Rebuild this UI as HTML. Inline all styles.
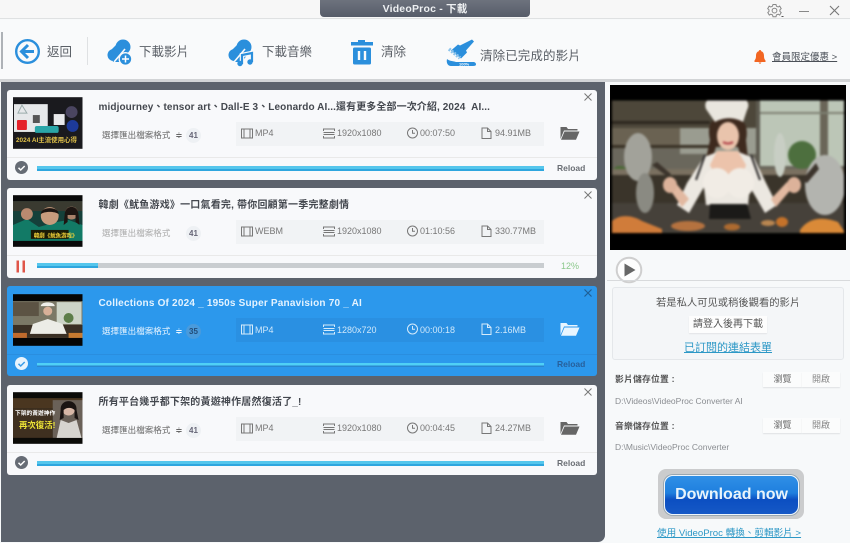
<!DOCTYPE html>
<html lang="zh-Hant"><head><meta charset="utf-8"><title>VideoProc - 下載</title>
<style>
*{box-sizing:border-box;margin:0;padding:0}
html,body{width:850px;height:543px;overflow:hidden;background:#f7f9fa}
body{position:relative;font-family:"Liberation Sans","Noto Sans CJK TC",sans-serif;color:#555;filter:blur(.3px)}
.a{position:absolute;white-space:nowrap}
.tb{font-size:12.5px;color:#5a5f66;line-height:16px}
.card{position:absolute;left:7px;width:590px;height:90px;background:#f8f9fb;border-radius:3px;overflow:hidden}
.card.sel{background:#2c98ec}
.thumb{position:absolute;left:6px;top:7.500px;width:69.500px;height:52px}
.title{position:absolute;left:91.500px;top:10px;font-size:10px;font-weight:700;color:#44484f;line-height:16px;white-space:nowrap;letter-spacing:.2px}
.sel .title{color:#e4f3ff}
.fmt{position:absolute;left:95px;top:38px;font-size:8.500px;line-height:14px;color:#666;white-space:nowrap;letter-spacing:.05px}
.sel .fmt{color:#eaf5ff}
.fmt.dim{color:#aaa}
.fmt b{font-weight:400;margin-left:5px}
.num{position:absolute;left:179px;top:38px;width:15px;height:15px;border-radius:8px;background:#eef1f4;font-size:8px;font-weight:700;text-align:center;line-height:15px;color:#667}
.sel .num{background:#4a9bdc;color:#234d78}
.row{position:absolute;left:229px;top:32px;width:308px;height:24px;background:#f1f3f5}
.sel .row{background:#2a90e2}
.it{position:absolute;top:5.500px;font-size:9px;line-height:13px;color:#777;white-space:nowrap}
.sel .it{color:#cfe8fb}
.ic{position:absolute;top:5px}
.div{position:absolute;left:0;top:67.500px;width:590px;height:1px;background:#e9e9e9}
.sel .div{background:#2a8edf}
.bar{position:absolute;left:30px;top:76px;width:507px;height:5px;background:linear-gradient(#55c6ec 0 60%,#2ea6de 60%)}
.bar.part{background:#c9cdd0}
.bar i{position:absolute;left:0;top:0;height:5px;width:61px;background:linear-gradient(#55c6ec 0 60%,#2ea6de 60%)}
.sel .bar{top:77px;height:4px;background:linear-gradient(#4fd0f6 0 65%,#2a86d0 65%)}
.rl{position:absolute;left:550px;top:72px;font-size:8.500px;font-weight:700;line-height:12px;color:#6a6e74}
.sel .rl{color:#27609c}
.x{position:absolute;left:576px;top:2px}
.folder{position:absolute;left:553px;top:36px}
.chk{position:absolute;left:7.500px;top:71px}
.sb{position:absolute;background:#fbfcfc;box-shadow:0 1px 1px #dfe2e4;font-size:9px;color:#666;text-align:center;line-height:15px;height:15px}
</style></head><body>

<!-- title bar -->
<div class="a" style="left:0;top:0;width:850px;height:19px;background:#f7f7f7;border-bottom:1px solid #dfe1e2"></div>
<div class="a" style="left:320px;top:0;width:210px;height:16.500px;background:linear-gradient(#6d727d,#565c69);border-radius:0 0 4px 4px;color:#eef0f2;font-size:10.500px;font-weight:700;text-align:center;line-height:18px;letter-spacing:.2px">VideoProc - 下載</div>
<svg class="a" style="left:766px;top:3px" width="18" height="16" viewBox="0 0 18 16" fill="none" stroke="#888" stroke-width="1"><path d="M7 1.500h3l.5 1.800 1.700.7 1.500-.9 1.500 2.500-1.300 1.200v1.600l1.300 1.200-1.500 2.500-1.500-.9-1.700.7-.5 1.800H7l-.5-1.800-1.700-.7-1.500.9-1.500-2.500L3 8.400V6.800L1.700 5.600l1.500-2.500 1.500.9 1.700-.7z"/><circle cx="8.500" cy="7.600" r="2.400"/><path d="M15.500 13.500h2" stroke="#555"/></svg>
<div class="a" style="left:799px;top:10.500px;width:10px;height:1px;background:#888"></div>
<svg class="a" style="left:829px;top:5px" width="11" height="11" stroke="#777" stroke-width="1.100"><path d="M1 1l9 9M10 1l-9 9"/></svg>

<!-- toolbar -->
<div class="a" style="left:0;top:20px;width:850px;height:60px;background:#f9fafb"></div>
<div class="a" style="left:1px;top:32px;width:2px;height:37px;background:#aeb2b7"></div>
<div class="a" style="left:87px;top:37px;width:1px;height:28px;background:#dfe1e3"></div>
<svg class="a" style="left:14px;top:38px" width="28" height="28" viewBox="0 0 28 28"><circle cx="13.500" cy="13.500" r="11.300" fill="#f9fafb" stroke="#2b8fdc" stroke-width="2.400"/><path d="M14 7l-6.500 6.500L14 20M8 13.500h12" fill="none" stroke="#2b8fdc" stroke-width="3"/></svg>
<div class="a tb" style="left:47px;top:44px">返回</div>
<svg class="a" style="left:105px;top:37px" width="30" height="30" viewBox="0 0 30 30"><g fill="#2b8fdc"><circle cx="8.500" cy="18" r="6"/><circle cx="18" cy="10" r="7.500"/><path d="M5 14l9-9 10 9-8 11H8z"/></g><path d="M9 25l11-13" stroke="#f9fafb" stroke-width="1.600"/><circle cx="20.500" cy="22" r="6.300" fill="#2b8fdc" stroke="#f9fafb" stroke-width="1.300"/><path d="M17 22h7M20.500 18.500v7" stroke="#fff" stroke-width="1.500"/></svg>
<div class="a tb" style="left:139px;top:44px">下載影片</div>
<svg class="a" style="left:227px;top:37px" width="30" height="30" viewBox="0 0 30 30"><g fill="#2b8fdc"><circle cx="7.500" cy="18" r="6"/><circle cx="17" cy="10" r="7.500"/><path d="M4 14l9-9 10 9-8 11H7z"/></g><path d="M7 25l11-13" stroke="#f9fafb" stroke-width="1.600"/><path d="M15 27V18l10-2v9" fill="none" stroke="#f9fafb" stroke-width="4.500"/><path d="M15 27V18l10-2v9" fill="none" stroke="#2b8fdc" stroke-width="2.200"/><circle cx="13" cy="26.500" r="2.700" fill="#2b8fdc"/><circle cx="23" cy="25" r="2.700" fill="#2b8fdc"/></svg>
<div class="a tb" style="left:262px;top:44px">下載音樂</div>
<svg class="a" style="left:350px;top:39px" width="24" height="28" viewBox="0 0 24 28"><path d="M8.500 3V1.500h6V3M1.500 3.500h21v2.500h-21z" fill="#2b8fdc" stroke="#2b8fdc"/><rect x="3" y="8.500" width="18" height="17" rx="1.500" fill="#2b8fdc"/><path d="M9 12v9M15 12v9" stroke="#f9fafb" stroke-width="2.400"/></svg>
<div class="a tb" style="left:381px;top:44px">清除</div>
<svg class="a" style="left:445px;top:38px" width="32" height="30" viewBox="0 0 32 30"><path d="M27 1.500l2 2-8 9 1 2-6 6-10-8 7-6 2 1z" fill="#2b8fdc"/><path d="M4 11l11 9" stroke="#8cc4ec" stroke-width="3.500" stroke-dasharray="2 1.200"/><path d="M2 21c2 2 6 2 9 3h17c2 0 3 1 3 2.500 0 1-1 1.500-3 1.500H6c-3 0-5-3-4-7z" fill="#2b8fdc"/><text x="14" y="27.400" font-size="4" font-weight="700" fill="#fff">100%</text></svg>
<div class="a tb" style="left:480px;top:47.500px;letter-spacing:.1px">清除已完成的影片</div>
<svg class="a" style="left:754px;top:50px" width="12" height="14" viewBox="0 0 12 14"><path d="M6 0c.8 0 1.200.6 1.200 1.200C9.300 1.800 10 3.600 10 6c0 2.500.7 3.500 1.500 4.500V12H.5v-1.500C1.300 9.500 2 8.500 2 6c0-2.400.7-4.200 2.800-4.800C4.800.6 5.200 0 6 0zM4.500 12.500h3L6 14z" fill="#f26522"/></svg>
<div class="a" style="left:772px;top:50.500px;font-size:9.500px;line-height:13px;color:#4b5058;text-decoration:underline">會員限定優惠 &gt;</div>

<!-- left panel -->
<div class="a" style="left:0;top:79px;width:850px;height:3px;background:#d2d4d6"></div>
<div class="a" style="left:1px;top:82px;width:604px;height:460px;background:#5c626c;border-radius:0 0 7px 0"></div>

<!-- card 1 -->
<div class="card" style="top:89.500px">
<svg class="thumb" viewBox="0 0 70 52"><rect width="70" height="52" fill="#1a1a1e"/><rect x="1" y="7" width="34" height="28" fill="#e6e8ea"/><rect x="20" y="18" width="7" height="8" fill="#555"/><path d="M5 16l4-8 5 8z" fill="none" stroke="#9aa" stroke-width="1"/><rect x="4" y="23" width="10" height="10" rx="1" fill="#e5222a"/><rect x="41" y="17" width="11" height="11" fill="#e9eaec"/><circle cx="60" cy="29" r="6" fill="#1d3a9a"/><circle cx="59" cy="15" r="6" fill="#4a4560"/><rect x="22" y="29" width="24" height="7" rx="2" fill="#2aa6a8"/><text x="3" y="45" font-size="6.500" font-weight="700" fill="#e2c34a">2024 AI主流使用心得</text></svg>
<div class="title" style="letter-spacing:.1px">midjourney、tensor art、Dall-E 3、Leonardo AI...還有更多全部一次介紹, 2024&nbsp; AI...</div>
<div class="fmt">選擇匯出檔案格式<b>≑</b></div><div class="num">41</div>
<div class="row"><svg class="ic" style="left:5px" width="12" height="13" fill="none" stroke="#777"><path d="M.5 2h11v9H.500zM3 2v9M9 2v9"/></svg><div class="it" style="left:19px">MP4</div><svg class="ic" style="left:87px" width="13" height="13" fill="none" stroke="#777"><path d="M.5 4V2h11v2M.500 5.500h11M.5 9v2h11V9M.500 7.500h11"/></svg><div class="it" style="left:101px">1920x1080</div><svg class="ic" style="left:170px" width="13" height="13" fill="none" stroke="#777"><circle cx="6.500" cy="6" r="5"/><path d="M6.500 3v3.300h2.500"/></svg><div class="it" style="left:184px">00:07:50</div><svg class="ic" style="left:245px" width="11" height="13" fill="none" stroke="#777"><path d="M1 1h5.500L10 4.500V11.500H1zM6.500 1v3.500H10"/></svg><div class="it" style="left:259px">94.91MB</div></div>
<svg class="folder" width="20" height="15" viewBox="0 0 20 15"><path d="M.5 1h6l1.500 2h9.500v1.500H4L.5 13z" fill="#666"/><path d="M4.500 5.500h15L16 13.800H1z" fill="#666"/></svg>
<svg class="x" width="10" height="10" stroke="#777"><path d="M1.500 1.500l7 7M8.500 1.500l-7 7"/></svg>
<div class="div"></div>
<svg class="chk" width="13" height="13"><circle cx="6.500" cy="6.500" r="6.500" fill="#666c75"/><path d="M3.500 6.800l2.200 2.200 4-4" fill="none" stroke="#fff" stroke-width="1.500"/></svg>
<div class="bar"></div><div class="rl">Reload</div>
</div>

<!-- card 2 -->
<div class="card" style="top:187.500px">
<svg class="thumb" viewBox="0 0 70 52"><rect width="70" height="52" fill="#0a0a0a"/><rect y="6" width="70" height="40" fill="#15403a"/><rect x="0" y="6" width="70" height="10" fill="#3a3a30"/><path d="M0 30l14-6 12 8 18-5 12-2 14 5v16H0z" fill="#127a66"/><circle cx="14" cy="19" r="6" fill="#b88a70"/><circle cx="37" cy="21" r="9" fill="#c79b7d"/><path d="M28 19c0-8 18-8 18 0-4-3-14-3-18 0z" fill="#1c1512"/><circle cx="59" cy="18" r="6.500" fill="#a8816a"/><path d="M52 20c0-11 14-11 14 0l1 10-4-3V20H55v7l-4 3z" fill="#1d1512"/><rect x="18" y="35" width="38" height="9" fill="#1a1a06"/><text x="21" y="42.500" font-size="5.500" font-weight="700" fill="#f3d43a">韓劇《魷魚游戏》</text></svg>
<div class="title">韓劇《魷鱼游戏》一口氣看完, 帶你回顧第一季完整劇情</div>
<div class="fmt dim">選擇匯出檔案格式</div><div class="num">41</div>
<div class="row"><svg class="ic" style="left:5px" width="12" height="13" fill="none" stroke="#777"><path d="M.5 2h11v9H.500zM3 2v9M9 2v9"/></svg><div class="it" style="left:19px">WEBM</div><svg class="ic" style="left:87px" width="13" height="13" fill="none" stroke="#777"><path d="M.5 4V2h11v2M.500 5.500h11M.5 9v2h11V9M.500 7.500h11"/></svg><div class="it" style="left:101px">1920x1080</div><svg class="ic" style="left:170px" width="13" height="13" fill="none" stroke="#777"><circle cx="6.500" cy="6" r="5"/><path d="M6.500 3v3.300h2.500"/></svg><div class="it" style="left:184px">01:10:56</div><svg class="ic" style="left:245px" width="11" height="13" fill="none" stroke="#777"><path d="M1 1h5.500L10 4.500V11.500H1zM6.500 1v3.500H10"/></svg><div class="it" style="left:259px">330.77MB</div></div>
<svg class="x" width="10" height="10" stroke="#777"><path d="M1.500 1.500l7 7M8.500 1.500l-7 7"/></svg>
<div class="div"></div>
<svg class="chk" style="top:72px;left:9px" width="11" height="13"><path d="M.5.500h2.500v12H.500zM6.500.500H9v12H6.500z" fill="#e0564a"/></svg>
<div class="bar part" style="top:75.500px"><i></i></div><div class="rl" style="left:554px;color:#8cc98c;font-weight:400;top:72px;font-size:9px">12%</div>
</div>

<!-- card 3 -->
<div class="card sel" style="top:286px">
<svg class="thumb" viewBox="0 0 70 52"><rect width="70" height="52" fill="#050505"/><rect y="7" width="70" height="37" fill="#7b7866"/><rect x="44" y="8" width="25" height="22" fill="#cdd4c7"/><rect y="8" width="26" height="14" fill="#5c5344"/><circle cx="56" cy="24" r="5" fill="#5c7d48"/><rect y="31" width="70" height="13" fill="#3a2f24"/><path d="M20 30l15-5 15 5 4 10H17z" fill="#ecece6"/><circle cx="35" cy="17" r="4.500" fill="#d8b098"/><path d="M28 12c0-5 14-5 14 0z" fill="#eeeee9"/><rect x="0" y="39" width="14" height="5" fill="#c06a2c"/><rect x="56" y="39" width="14" height="5" fill="#c67a30"/></svg>
<div class="title">Collections Of 2024 _ 1950s Super Panavision 70 _ AI</div>
<div class="fmt">選擇匯出檔案格式<b>≑</b></div><div class="num">35</div>
<div class="row"><svg class="ic" style="left:5px" width="12" height="13" fill="none" stroke="#d5ebfb"><path d="M.5 2h11v9H.500zM3 2v9M9 2v9"/></svg><div class="it" style="left:19px">MP4</div><svg class="ic" style="left:87px" width="13" height="13" fill="none" stroke="#d5ebfb"><path d="M.5 4V2h11v2M.500 5.500h11M.5 9v2h11V9M.500 7.500h11"/></svg><div class="it" style="left:101px">1280x720</div><svg class="ic" style="left:170px" width="13" height="13" fill="none" stroke="#d5ebfb"><circle cx="6.500" cy="6" r="5"/><path d="M6.500 3v3.300h2.500"/></svg><div class="it" style="left:184px">00:00:18</div><svg class="ic" style="left:245px" width="11" height="13" fill="none" stroke="#d5ebfb"><path d="M1 1h5.500L10 4.500V11.500H1zM6.500 1v3.500H10"/></svg><div class="it" style="left:259px">2.16MB</div></div>
<svg class="folder" width="20" height="15" viewBox="0 0 20 15"><path d="M.5 1h6l1.500 2h9.500v1.500H4L.5 13z" fill="#e8f5ff"/><path d="M4.500 5.500h15L16 13.800H1z" fill="#e8f5ff"/></svg>
<svg class="x" width="10" height="10" stroke="#1f5f96" stroke-width="1.200"><path d="M1.500 1.500l7 7M8.500 1.500l-7 7"/></svg>
<div class="div"></div>
<svg class="chk" width="13" height="13"><circle cx="6.500" cy="6.500" r="6.500" fill="#e8f4fd"/><path d="M3.500 6.800l2.200 2.200 4-4" fill="none" stroke="#3a9ce8" stroke-width="1.500"/></svg>
<div class="bar"></div><div class="rl">Reload</div>
</div>

<!-- card 4 -->
<div class="card" style="top:384.500px">
<svg class="thumb" viewBox="0 0 70 52"><rect width="70" height="52" fill="#0b0b08"/><rect y="6" width="70" height="10" fill="#4a3620"/><rect y="16" width="40" height="30" fill="#3f3020"/><rect x="40" y="8" width="30" height="38" fill="#6a6158"/><circle cx="56" cy="17" r="6.500" fill="#d7b7a6"/><path d="M48 18c-1-12 17-12 16 0l2 10-4-2v-8c-3-3-8-3-11 0v8l-4 2z" fill="#1a1412"/><path d="M44 46l4-18 8 3 8-3 5 18z" fill="#d6d4cf"/><text x="2" y="23" font-size="5.800" font-weight="700" fill="#fff">下架的黃遊神作</text><text x="6" y="36" font-size="8.500" font-weight="700" fill="#ece236">再次復活!</text></svg>
<div class="title">所有平台幾乎都下架的黃遊神作居然復活了_!</div>
<div class="fmt">選擇匯出檔案格式<b>≑</b></div><div class="num">41</div>
<div class="row"><svg class="ic" style="left:5px" width="12" height="13" fill="none" stroke="#777"><path d="M.5 2h11v9H.500zM3 2v9M9 2v9"/></svg><div class="it" style="left:19px">MP4</div><svg class="ic" style="left:87px" width="13" height="13" fill="none" stroke="#777"><path d="M.5 4V2h11v2M.500 5.500h11M.5 9v2h11V9M.500 7.500h11"/></svg><div class="it" style="left:101px">1920x1080</div><svg class="ic" style="left:170px" width="13" height="13" fill="none" stroke="#777"><circle cx="6.500" cy="6" r="5"/><path d="M6.500 3v3.300h2.500"/></svg><div class="it" style="left:184px">00:04:45</div><svg class="ic" style="left:245px" width="11" height="13" fill="none" stroke="#777"><path d="M1 1h5.500L10 4.500V11.500H1zM6.500 1v3.500H10"/></svg><div class="it" style="left:259px">24.27MB</div></div>
<svg class="folder" width="20" height="15" viewBox="0 0 20 15"><path d="M.5 1h6l1.500 2h9.500v1.500H4L.5 13z" fill="#666"/><path d="M4.500 5.500h15L16 13.800H1z" fill="#666"/></svg>
<svg class="x" width="10" height="10" stroke="#777"><path d="M1.500 1.500l7 7M8.500 1.500l-7 7"/></svg>
<div class="div"></div>
<svg class="chk" width="13" height="13"><circle cx="6.500" cy="6.500" r="6.500" fill="#666c75"/><path d="M3.500 6.800l2.200 2.200 4-4" fill="none" stroke="#fff" stroke-width="1.500"/></svg>
<div class="bar"></div><div class="rl">Reload</div>
</div>

<!-- right panel: video -->
<div class="a" style="left:610px;top:85px;width:236px;height:165px;background:#000;overflow:hidden">
<svg style="position:absolute;left:0;top:0;filter:blur(1px)" width="236" height="165" viewBox="0 0 236 165">
<defs><clipPath id="v"><rect x="2" y="15.500" width="232" height="132.500"/></clipPath></defs>
<g clip-path="url(#v)">
<rect x="0" y="15" width="236" height="134" fill="#6a675c"/>
<rect x="148" y="15" width="88" height="66" fill="#bcc6b7"/>
<rect x="146" y="15" width="4" height="68" fill="#5d5a50"/><rect x="210" y="15" width="8" height="104" fill="#6a6558"/>
<rect x="150" y="27" width="86" height="2" fill="#7d8072"/>
<rect x="2" y="15" width="144" height="28" fill="#4d473a"/>
<rect x="70" y="43" width="76" height="26" fill="#9a9c90"/>
<rect x="2" y="43" width="68" height="20" fill="#6a6252"/>
<rect x="2" y="36" width="98" height="3" fill="#2e281f"/><rect x="2" y="60" width="98" height="3" fill="#3a3226"/>
<circle cx="192" cy="70" r="14" fill="#4d6f3e"/><circle cx="10" cy="90" r="9" fill="#4a6a36"/>
<rect x="2" y="84" width="234" height="6" fill="#7a7060"/>
<rect x="2" y="90" width="234" height="28" fill="#3a342a"/>
<rect x="2" y="118" width="234" height="31" fill="#46413a"/>
<ellipse cx="28" cy="72" rx="14" ry="24" fill="#a2a29a"/><ellipse cx="215" cy="100" rx="20" ry="30" fill="#b3b4af"/><ellipse cx="35" cy="108" rx="9" ry="20" fill="#8a8a82"/><ellipse cx="170" cy="70" rx="6" ry="22" fill="#c8cec4"/>
<path d="M2 136c8-7 20-6 30 0l20 8v5H2z" fill="#d07c3a"/><path d="M190 145c8-12 22-14 38-8l8 12h-46z" fill="#da8a38"/><ellipse cx="78" cy="141" rx="17" ry="5" fill="#b5723f"/><ellipse cx="172" cy="137" rx="6" ry="5" fill="#c4722a"/><ellipse cx="122" cy="142" rx="8" ry="3.500" fill="#ad6a30"/><ellipse cx="158" cy="138" rx="7" ry="3" fill="#b98650"/>
<path d="M100 55c-3-14 0-24 17-24s22 10 19 24l2 19h-6l-4-12h-22l-4 12h-6z" fill="#3e2a1e"/>
<path d="M96 24c-3-9 4-11 10-9l12-2 14 1c6 0 8 6 5 11l-4 12c-8-5-20-5-28 0z" fill="#e9e6de"/>
<ellipse cx="118" cy="51" rx="11" ry="14" fill="#e9c4ac"/><path d="M113 57c3 2 7 2 10 0" stroke="#b3464c" stroke-width="2" fill="none"/>
<path d="M94 72l16-6h16l18 7 12 25 11 22-12 8-15-26-2 18h-42l-2-18-15 26-12-8 10-22z" fill="#ece8e1"/>
<path d="M107 66h21l8 14c-4 16-30 16-36 0z" fill="#ecc3ab"/>
<ellipse cx="107" cy="98" rx="14" ry="15" fill="#f1ece5"/><ellipse cx="130" cy="98" rx="14" ry="15" fill="#f1ece5"/>
<path d="M100 119h37l4 15h-42z" fill="#1b1a18"/>
<path d="M95 70l-9 25M141 70l9 25" stroke="#2c2a2a" stroke-width="2"/>
<path d="M72 122l-14-20 7-5 14 17zM166 122l17-20-6-5-16 17z" fill="#e2b9a1"/>
<ellipse cx="60" cy="100" rx="7" ry="8" fill="#dcb29a"/><ellipse cx="184" cy="100" rx="7" ry="8" fill="#dcb29a"/>
<path d="M42 80l16 12 3-3-14-12zM206 78l-14 17 5 3 12-14z" fill="#3c342c"/>
</g></svg>
</div>
<svg class="a" style="left:615px;top:256px" width="30" height="30" viewBox="0 0 30 30"><circle cx="14" cy="14" r="12.300" fill="#fdfdfd" stroke="#cfcfcf" stroke-width="2"/><path d="M9.500 7.500l11 6.500-11 6.500z" fill="#666"/></svg>
<div class="a" style="left:607px;top:280px;width:243px;height:1px;background:#d8dadc"></div>

<!-- right panel: info box -->
<div class="a" style="left:612px;top:287px;width:232px;height:73px;background:#f4f6f8;border:1px solid #e4e7ea;border-radius:3px"></div>
<div class="a" style="left:656px;top:296px;font-size:10.300px;line-height:15px;color:#555">若是私人可见或稍後觀看的影片</div>
<div class="a" style="left:689px;top:316px;width:78px;height:17px;background:#fdfdfd;box-shadow:0 1px 1px #e2e4e6;font-size:10px;line-height:17px;text-align:center;color:#555">請登入後再下載</div>
<div class="a" style="left:684px;top:340px;font-size:11px;line-height:16px;color:#2d98c6;text-decoration:underline">已訂閱的連結表單</div>

<div class="a" style="left:615px;top:373px;font-size:8.800px;font-weight:700;line-height:13px;letter-spacing:.2px;color:#555">影片儲存位置 :</div>
<div class="sb" style="left:763px;top:372px;width:39px">瀏覽</div><div class="sb" style="left:802px;top:372px;width:38px;color:#888">開啟</div>
<div class="a" style="left:615px;top:395px;font-size:8.500px;line-height:13px;color:#8a8d91">D:\Videos\VideoProc Converter AI</div>
<div class="a" style="left:615px;top:420px;font-size:8.800px;font-weight:700;line-height:13px;letter-spacing:.2px;color:#555">音樂儲存位置 :</div>
<div class="sb" style="left:763px;top:418px;width:39px">瀏覽</div><div class="sb" style="left:802px;top:418px;width:38px;color:#888">開啟</div>
<div class="a" style="left:615px;top:441px;font-size:8.500px;line-height:13px;color:#8a8d91">D:\Music\VideoProc Converter</div>

<!-- download button -->
<div class="a" style="left:658px;top:469px;width:146px;height:50px;background:#cbcccd;border-radius:8px"></div>
<div class="a" style="left:664px;top:475px;width:135px;height:40px;border-radius:9px;background:linear-gradient(#2f8fe6 0%,#1f7fde 45%,#0c4fc2 62%,#1659c6 100%);border:1.500px solid #eef5fb;box-shadow:0 0 0 1px #9aa7b0;color:#e8f3fb;font-size:16px;font-weight:700;text-align:center;line-height:37px">Download now</div>
<div class="a" style="left:657px;top:526px;font-size:9.600px;line-height:15px;color:#2d98c6;text-decoration:underline">使用 VideoProc 轉換、剪輯影片 &gt;</div>

</body></html>
